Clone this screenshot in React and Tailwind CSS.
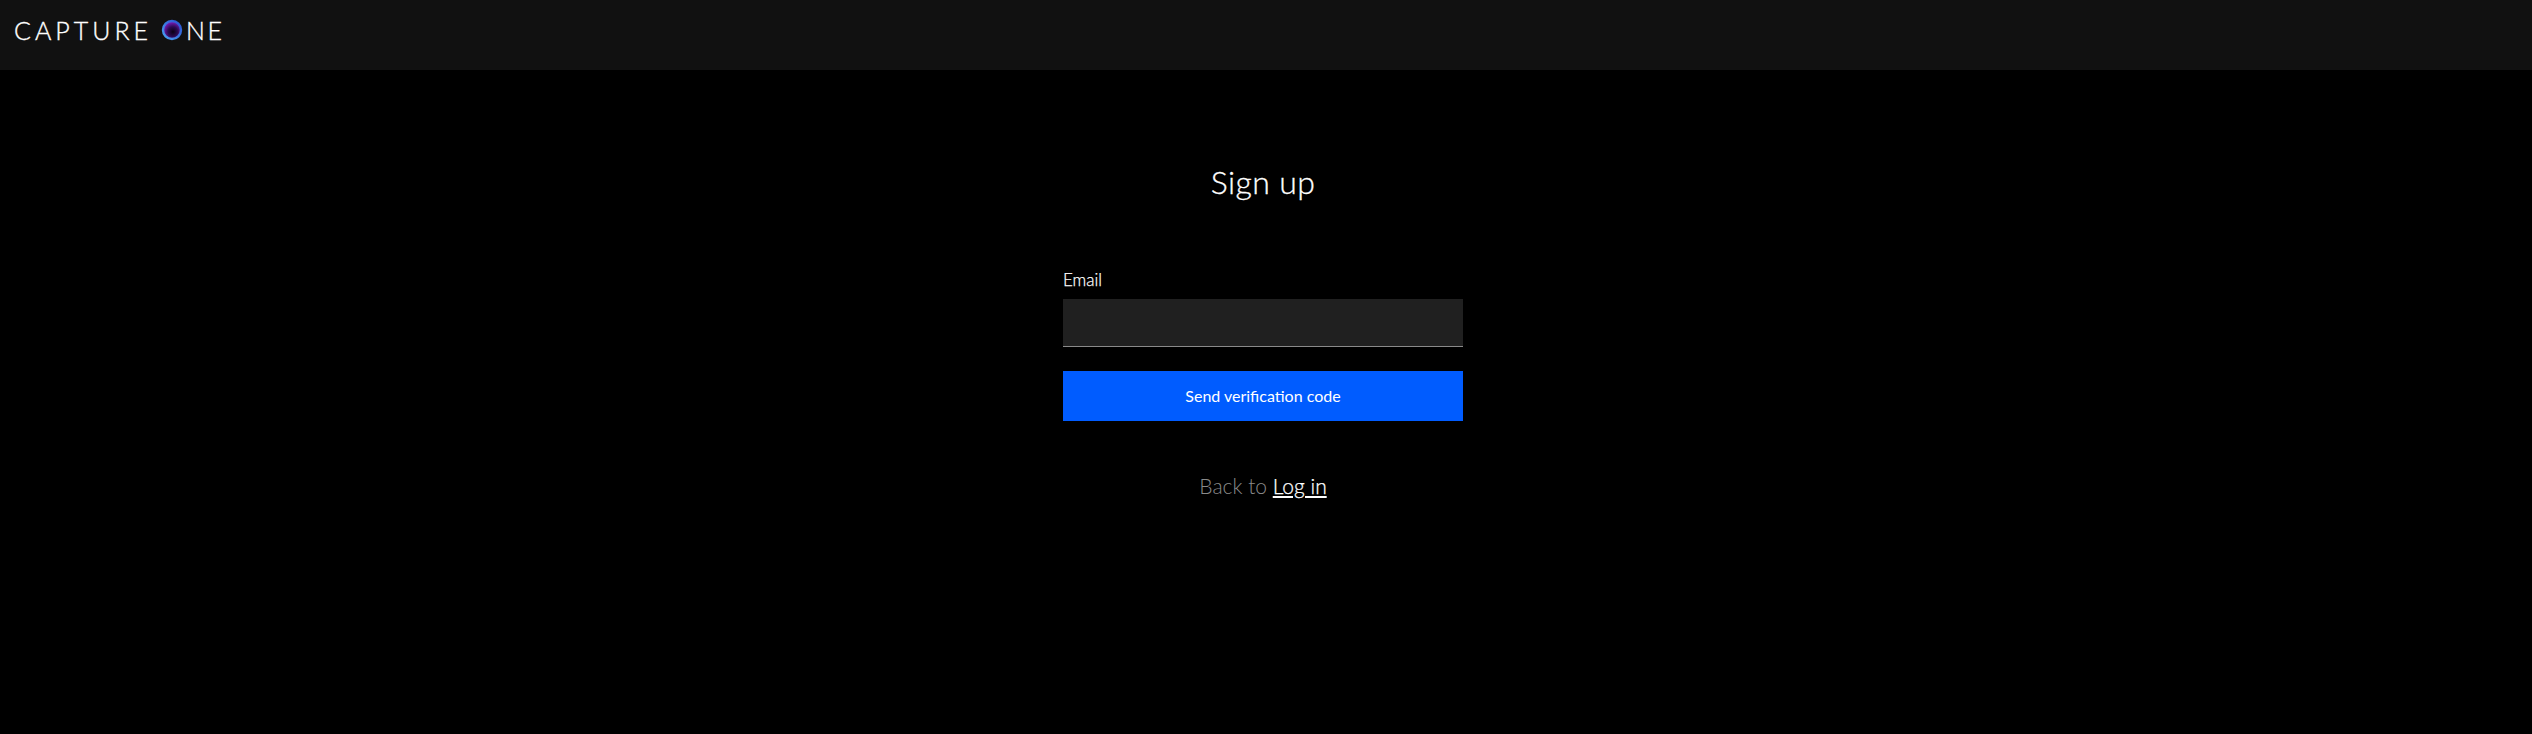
const FONT = "font-['Lato','Noto_Sans',sans-serif]";

function LogoRing() {
  return (
    <svg width="22" height="22" viewBox="0 0 22 22" className="ml-[9px] mr-[3px] shrink-0">
      <defs>
        <radialGradient id="ringFill" cx="55%" cy="60%" r="60%">
          <stop offset="0%" stopColor="#0a0014" />
          <stop offset="45%" stopColor="#2a0a50" />
          <stop offset="100%" stopColor="#8a1fd0" />
        </radialGradient>
        <linearGradient id="ringStroke" x1="1" y1="0" x2="0" y2="1">
          <stop offset="0%" stopColor="#2a50d0" />
          <stop offset="100%" stopColor="#4aa0f0" />
        </linearGradient>
      </defs>
      <circle cx="11" cy="11" r="9" fill="url(#ringFill)" stroke="url(#ringStroke)" strokeWidth="2.4" />
    </svg>
  );
}

export default function App() {
  return (
    <div className={`min-h-[734px] bg-black text-white ${FONT}`}>
      {/* Top bar */}
      <header className="h-[70px] bg-[#111111] pl-[14px] pt-[15px]">
        <div className="flex items-center h-[30px] text-[25px] leading-none font-light text-white [-webkit-text-stroke:0.35px_white]">
          <span className="tracking-[4px]">CAPTURE</span>
          <LogoRing />
          <span className="tracking-[2.6px]">NE</span>
        </div>
      </header>

      {/* Form */}
      <main className="flex flex-col items-center pr-[6px] pt-[92px]">
        <h1 className="text-[32px] leading-[40px] font-light tracking-[0.4px] [-webkit-text-stroke:0.3px_white]">
          Sign up
        </h1>
        <form className="mt-[68px] w-[400px]">
          <label className="block text-[17px] leading-[20px] mb-[9px] font-light [-webkit-text-stroke:0.25px_white]">
            Email
          </label>
          <input
            type="text"
            className="block w-full h-[48px] bg-[#202020] border-b border-[#8a8a8a] outline-none"
          />
          <button
            type="button"
            className="mt-[24px] block w-full h-[50px] bg-[#005cff] text-[16px] text-white"
          >
            Send verification code
          </button>
        </form>
        <p className="mt-[52px] text-[21px] leading-[26px] font-light text-[#8a8a8a]">
          Back to <a className="text-white underline [-webkit-text-stroke:0.25px_white]">Log in</a>
        </p>
      </main>
    </div>
  );
}
